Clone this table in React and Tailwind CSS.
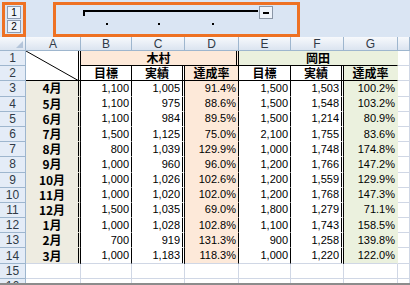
import React from "react";

const data = [
  ["4月", "1,100", "1,005", "91.4%", "1,500", "1,503", "100.2%"],
  ["5月", "1,100", "975", "88.6%", "1,500", "1,548", "103.2%"],
  ["6月", "1,100", "984", "89.5%", "1,500", "1,214", "80.9%"],
  ["7月", "1,500", "1,125", "75.0%", "2,100", "1,755", "83.6%"],
  ["8月", "800", "1,039", "129.9%", "1,000", "1,748", "174.8%"],
  ["9月", "1,000", "960", "96.0%", "1,200", "1,766", "147.2%"],
  ["10月", "1,000", "1,026", "102.6%", "1,200", "1,559", "129.9%"],
  ["11月", "1,000", "1,020", "102.0%", "1,200", "1,768", "147.3%"],
  ["12月", "1,500", "1,035", "69.0%", "1,800", "1,279", "71.1%"],
  ["1月", "1,000", "1,028", "102.8%", "1,100", "1,743", "158.5%"],
  ["2月", "700", "919", "131.3%", "900", "1,258", "139.8%"],
  ["3月", "1,000", "1,183", "118.3%", "1,000", "1,220", "122.0%"],
];

const rowHdr =
  "bg-[#e4ecf7] border-r border-b border-[#9eb6ce] flex items-center justify-center text-[12px] leading-none text-[#303a46] font-['Liberation_Sans',sans-serif]";
const colHdr =
  "bg-linear-to-b from-[#f7f9fc] to-[#dbe4f0] border-r border-b border-[#9eb6ce] flex items-center justify-center text-[12px] leading-none text-[#303a46] font-['Liberation_Sans',sans-serif]";
const num =
  "flex items-center justify-end pr-[2px] text-[11px] leading-none text-black font-['Liberation_Sans',sans-serif]";
const jp =
  "flex items-center justify-center text-[12px] leading-[12px] font-bold text-black font-['Noto_Sans_CJK_JP',sans-serif]";

const dataCls = [
  `${jp} bg-[#eeece1] border-r-[3px] border-b border-double border-r-black border-b-[#eeece1]`,
  `${num} bg-white border-r border-b border-r-black border-b-white`,
  `${num} bg-white border-r-[3px] border-b border-double border-r-black border-b-white`,
  `${num} bg-[#fde9d9] border-r border-b border-r-black border-b-[#fde9d9]`,
  `${num} bg-white border-r border-b border-r-black border-b-white`,
  `${num} bg-white border-r-[3px] border-b border-double border-r-black border-b-white`,
  `${num} bg-[#ebf1de] border-r border-b border-r-[#ebf1de] border-b-[#ebf1de]`,
];

const lastCls = [
  `${jp} bg-[#eeece1] border-r-[3px] border-b border-double border-r-black border-b-[#d0d7e5]`,
  `${num} bg-white border-r border-b border-r-black border-b-[#d0d7e5]`,
  `${num} bg-white border-r-[3px] border-b border-double border-r-black border-b-[#d0d7e5]`,
  `${num} bg-[#fde9d9] border-r border-b border-r-black border-b-[#d0d7e5]`,
  `${num} bg-white border-r border-b border-r-black border-b-[#d0d7e5]`,
  `${num} bg-white border-r-[3px] border-b border-double border-r-black border-b-[#d0d7e5]`,
  `${num} bg-[#ebf1de] border-r border-b border-r-[#ebf1de] border-b-[#d0d7e5]`,
];

const subCls = [
  `${jp} bg-white border-r border-b border-black`,
  `${jp} bg-white border-r-[3px] border-b border-double border-black`,
  `${jp} bg-[#fde9d9] border-r border-b border-black`,
  `${jp} bg-white border-r border-b border-black`,
  `${jp} bg-white border-r-[3px] border-b border-double border-black`,
  `${jp} bg-[#ebf1de] border-r border-b border-r-[#ebf1de] border-b-black`,
];
const subTxt = ["目標", "実績", "達成率", "目標", "実績", "達成率"];

const emptyCell = "bg-white border-r border-b border-[#d0d7e5]";

export default function App() {
  return (
    <div className="w-[410px] h-[285px] overflow-hidden bg-white">
      {/* outline bar */}
      <div className="h-[37px] bg-[#dae5f3] flex items-start pt-[2px]">
        <div className="ml-[2px] w-[24px] h-[35px] border-[3px] border-[#ee7123] flex flex-col items-center justify-center gap-[1px]">
          <div className="w-[14px] h-[13px] border border-[#8d9bb0] bg-[#eef3fa] flex items-center justify-center text-[10px] leading-none text-black font-['Liberation_Sans',sans-serif]">
            1
          </div>
          <div className="w-[14px] h-[13px] border border-[#8d9bb0] bg-[#eef3fa] flex items-center justify-center text-[10px] leading-none text-black font-['Liberation_Sans',sans-serif]">
            2
          </div>
        </div>
        <div className="ml-[27px] w-[247px] h-[35px] border-[3px] border-[#ee7123] relative">
          <svg className="absolute left-0 top-0" width="241" height="29" viewBox="0 0 241 29">
            <rect x="27" y="5" width="175" height="2" fill="#000" />
            <rect x="27" y="5" width="2" height="6" fill="#000" />
            <rect x="50" y="18" width="2" height="2" fill="#000" />
            <rect x="102" y="18" width="2" height="2" fill="#000" />
            <rect x="156" y="18" width="2" height="2" fill="#000" />
          </svg>
          <div className="absolute left-[203px] top-[1px] w-[14px] h-[13px] border border-[#8a96a6] bg-[#eef3fa] flex items-center justify-center">
            <div className="w-[6px] h-[2px] bg-black" />
          </div>
        </div>
      </div>

      {/* sheet */}
      <div className="h-[248px] overflow-hidden border-b-2 border-[#8c8c8c]">
        <div className="grid grid-cols-[26px_55px_51px_53px_54px_52px_53px_54px_1fr] grid-rows-[14px_repeat(16,15.2px)]">
          {/* header row */}
          <div className={`${colHdr} relative`}>
            <svg className="absolute right-[2px] bottom-[2px]" width="7" height="7" viewBox="0 0 7 7">
              <polygon points="7,0 7,7 0,7" fill="#b4c5da" />
            </svg>
          </div>
          {["A", "B", "C", "D", "E", "F", "G", ""].map((c, i) => (
            <div key={i} className={colHdr}>
              {c}
            </div>
          ))}

          {/* row 1 */}
          <div className={rowHdr}>1</div>
          <div className="row-span-2 bg-white border-r-[3px] border-b border-double border-r-black border-b-black relative">
            <svg className="absolute inset-0 w-full h-full" viewBox="0 0 100 100" preserveAspectRatio="none">
              <line x1="0" y1="0" x2="100" y2="100" stroke="#000" strokeWidth="1" vectorEffect="non-scaling-stroke" />
            </svg>
          </div>
          <div className={`${jp} col-span-3 bg-[#fde9d9] border-r-[3px] border-b border-double border-r-black border-b-black`}>
            木村
          </div>
          <div className={`${jp} col-span-3 bg-[#ebf1de] border-r border-b border-r-[#ebf1de] border-b-black`}>
            岡田
          </div>
          <div className={emptyCell} />

          {/* row 2 */}
          <div className={rowHdr}>2</div>
          {subTxt.map((t, i) => (
            <div key={i} className={subCls[i]}>
              {t}
            </div>
          ))}
          <div className={emptyCell} />

          {/* data rows */}
          {data.map((r, ri) => (
            <React.Fragment key={ri}>
              <div className={rowHdr}>{ri + 3}</div>
              {r.map((v, ci) => (
                <div key={ci} className={ri === data.length - 1 ? lastCls[ci] : dataCls[ci]}>
                  {v}
                </div>
              ))}
              <div className={emptyCell} />
            </React.Fragment>
          ))}

          {/* empty rows */}
          {[15, 16].map((n) => (
            <React.Fragment key={n}>
              <div className={rowHdr}>{n}</div>
              {[0, 1, 2, 3, 4, 5, 6, 7].map((i) => (
                <div key={i} className={emptyCell} />
              ))}
            </React.Fragment>
          ))}
        </div>
      </div>
    </div>
  );
}
